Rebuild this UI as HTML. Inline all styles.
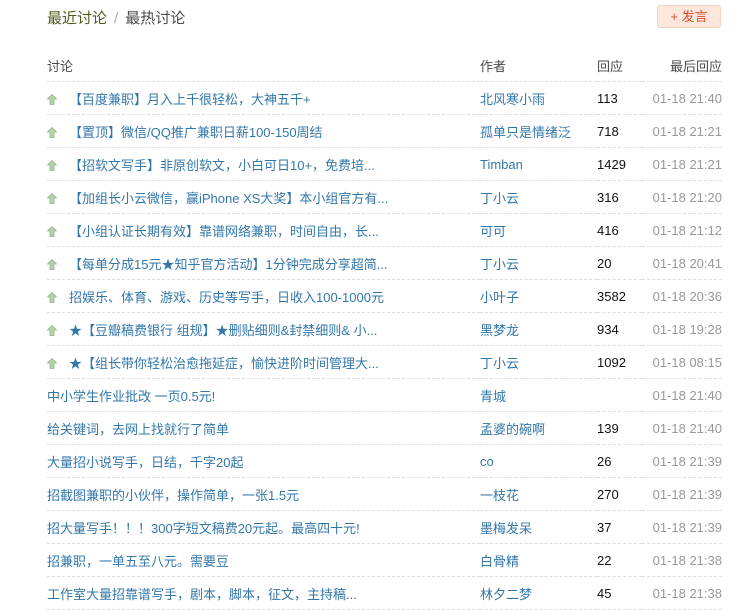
<!DOCTYPE html>
<html><head><style>
body{margin:0;background:#fff;font-family:"Liberation Sans","Noto Sans CJK SC",sans-serif;font-size:13px;color:#111;}
.top{position:absolute;left:47px;top:7px;font-size:15px;color:#494949;}
.top .a{color:#4f5a1e}
.top .s{color:#aaa;margin:0 7px}
.btn{position:absolute;left:657px;top:5px;width:64px;height:23px;box-sizing:border-box;background:#fbe7dc;border:1px solid #f3d3bf;border-radius:3px;color:#d4532d;font-size:13px;text-align:center;line-height:21px}
table{position:absolute;left:47px;top:49px;width:675px;border-collapse:collapse;table-layout:fixed;font-size:13px}
td{height:32px;border-bottom:1px dashed #ddd;padding:0;white-space:nowrap;overflow:hidden;vertical-align:middle}
.c1{width:433px}.c2{width:117px}.c3{width:45px}.c4{text-align:right;color:#999}
a{color:#37a;text-decoration:none}
.up{display:inline-block;width:22px;vertical-align:-1px}
</style></head><body>
<div class="top"><span class="a">最近讨论</span><span class="s">/</span>最热讨论</div>
<div class="btn">+ 发言</div>
<svg width="0" height="0" style="position:absolute"><defs><symbol id="u" viewBox="0 0 10 11"><path d="M5 0.5L9.5 5H7V10.5H3V5H0.5Z" fill="#b7d1b0" stroke="#8fb487" stroke-width="0.8"/></symbol></defs></svg>
<table>
<tr><td class="c1" style="color:#494949">讨论</td><td class="c2" style="color:#494949">作者</td><td class="c3" style="color:#494949">回应</td><td class="c4" style="color:#494949">最后回应</td></tr>
<tr><td><span class="up"><svg width="10" height="11"><use href="#u"/></svg></span><a>【百度兼职】月入上千很轻松，大神五千+</a></td><td><a>北风寒小雨</a></td><td>113</td><td class="c4">01-18 21:40</td></tr>
<tr><td><span class="up"><svg width="10" height="11"><use href="#u"/></svg></span><a>【置顶】微信/QQ推广兼职日薪100-150周结</a></td><td><a>孤单只是情绪泛</a></td><td>718</td><td class="c4">01-18 21:21</td></tr>
<tr><td><span class="up"><svg width="10" height="11"><use href="#u"/></svg></span><a>【招软文写手】非原创软文，小白可日10+，免费培...</a></td><td><a>Timban</a></td><td>1429</td><td class="c4">01-18 21:21</td></tr>
<tr><td><span class="up"><svg width="10" height="11"><use href="#u"/></svg></span><a>【加组长小云微信，赢iPhone XS大奖】本小组官方有...</a></td><td><a>丁小云</a></td><td>316</td><td class="c4">01-18 21:20</td></tr>
<tr><td><span class="up"><svg width="10" height="11"><use href="#u"/></svg></span><a>【小组认证长期有效】靠谱网络兼职，时间自由，长...</a></td><td><a>可可</a></td><td>416</td><td class="c4">01-18 21:12</td></tr>
<tr><td><span class="up"><svg width="10" height="11"><use href="#u"/></svg></span><a>【每单分成15元★知乎官方活动】1分钟完成分享超简...</a></td><td><a>丁小云</a></td><td>20</td><td class="c4">01-18 20:41</td></tr>
<tr><td><span class="up"><svg width="10" height="11"><use href="#u"/></svg></span><a>招娱乐、体育、游戏、历史等写手，日收入100-1000元</a></td><td><a>小叶子</a></td><td>3582</td><td class="c4">01-18 20:36</td></tr>
<tr><td><span class="up"><svg width="10" height="11"><use href="#u"/></svg></span><a>★【豆瓣稿费银行 组规】★删贴细则&amp;封禁细则&amp; 小...</a></td><td><a>黑梦龙</a></td><td>934</td><td class="c4">01-18 19:28</td></tr>
<tr><td><span class="up"><svg width="10" height="11"><use href="#u"/></svg></span><a>★【组长带你轻松治愈拖延症，愉快进阶时间管理大...</a></td><td><a>丁小云</a></td><td>1092</td><td class="c4">01-18 08:15</td></tr>
<tr><td><a>中小学生作业批改 一页0.5元!</a></td><td><a>青城</a></td><td></td><td class="c4">01-18 21:40</td></tr>
<tr><td><a>给关键词，去网上找就行了简单</a></td><td><a>孟婆的碗啊</a></td><td>139</td><td class="c4">01-18 21:40</td></tr>
<tr><td><a>大量招小说写手，日结，千字20起</a></td><td><a>co</a></td><td>26</td><td class="c4">01-18 21:39</td></tr>
<tr><td><a>招截图兼职的小伙伴，操作简单，一张1.5元</a></td><td><a>一枝花</a></td><td>270</td><td class="c4">01-18 21:39</td></tr>
<tr><td><a>招大量写手！！！300字短文稿费20元起。最高四十元!</a></td><td><a>墨梅发呆</a></td><td>37</td><td class="c4">01-18 21:39</td></tr>
<tr><td><a>招兼职，一单五至八元。需要豆</a></td><td><a>白骨精</a></td><td>22</td><td class="c4">01-18 21:38</td></tr>
<tr><td><a>工作室大量招靠谱写手，剧本，脚本，征文，主持稿...</a></td><td><a>林夕二梦</a></td><td>45</td><td class="c4">01-18 21:38</td></tr>
</table>
</body></html>
